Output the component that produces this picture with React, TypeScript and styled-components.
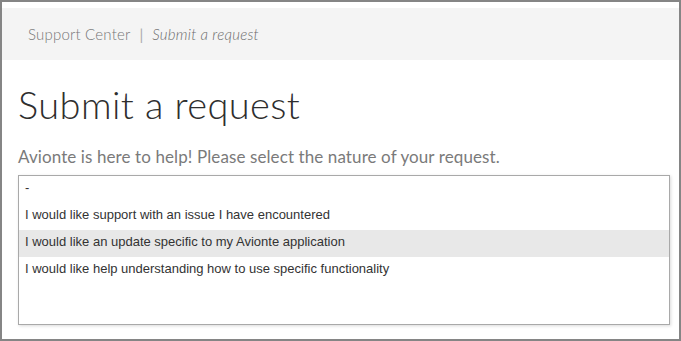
import styled, { createGlobalStyle } from "styled-components";

const GlobalStyle = createGlobalStyle`
  html, body {
    margin: 0;
    padding: 0;
    background: #ffffff;
  }
  * {
    box-sizing: border-box;
  }
`;

const Frame = styled.div`
  width: 681px;
  height: 341px;
  border: 2px solid #858585;
  background: #ffffff;
  padding-top: 6px;
  overflow: hidden;
  font-family: Lato, "Open Sans", sans-serif;
`;

const Header = styled.div`
  height: 52px;
  background: #f4f4f4;
  display: flex;
  align-items: center;
  padding-left: 26px;
  font-size: 15px;
  color: #8c8c8c;
`;

const Crumb = styled.span<{ $current?: boolean }>`
  font-style: ${(p) => (p.$current ? "italic" : "normal")};
  font-weight: 300;
  color: ${(p) => (p.$current ? "#6c6c6c" : "#767676")};
  letter-spacing: ${(p) => (p.$current ? "0.25px" : "0.2px")};
`;

const Sep = styled.span`
  margin: 0 9px;
  color: #aaaaaa;
`;

const Main = styled.div`
  padding: 0 9px 0 16px;
`;

const Title = styled.h1`
  margin: 20px 0 0;
  font-size: 38px;
  font-weight: 300;
  line-height: 48px;
  color: #2e2e2e;
  letter-spacing: 0.4px;
`;

const Lead = styled.p`
  margin: 18px 0 0;
  font-size: 17px;
  font-weight: 400;
  line-height: 22px;
  color: #7a7a7a;
  letter-spacing: 0.1px;
`;

const ListBox = styled.div`
  margin-top: 7px;
  width: 652px;
  height: 150px;
  border: 1px solid #a9a9a9;
  box-shadow: 1px 1px 3px rgba(0, 0, 0, 0.15);
  font-family: "Liberation Sans", Arial, sans-serif;
  font-size: 13px;
  color: #333333;
`;

const Option = styled.div<{ $active?: boolean }>`
  height: 27px;
  line-height: 24px;
  padding: 0 0 3px 6px;
  background: ${(p) => (p.$active ? "#e8e8e8" : "transparent")};
  white-space: nowrap;
`;

const options = [
  "-",
  "I would like support with an issue I have encountered",
  "I would like an update specific to my Avionte application",
  "I would like help understanding how to use specific functionality",
];

export default function App() {
  return (
    <>
      <GlobalStyle />
      <Frame>
        <Header>
          <Crumb>Support Center</Crumb>
          <Sep>|</Sep>
          <Crumb $current>Submit a request</Crumb>
        </Header>
        <Main>
          <Title>Submit a request</Title>
          <Lead>Avionte is here to help! Please select the nature of your request.</Lead>
          <ListBox>
            {options.map((o, i) => (
              <Option key={i} $active={i === 2}>
                {o}
              </Option>
            ))}
          </ListBox>
        </Main>
      </Frame>
    </>
  );
}
